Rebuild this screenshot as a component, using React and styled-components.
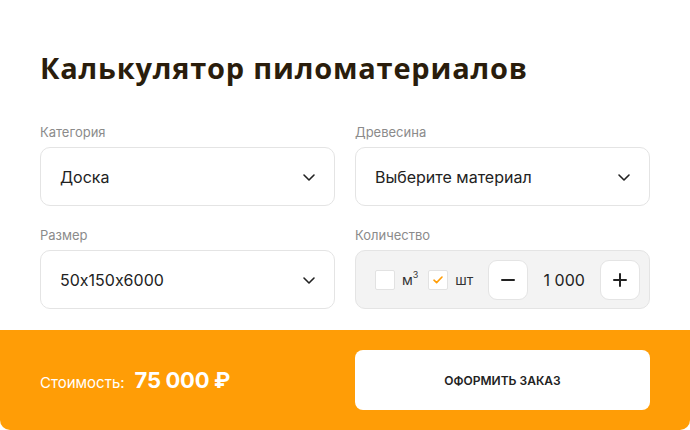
import React, { useState } from "react";
import styled, { createGlobalStyle } from "styled-components";

const GlobalStyle = createGlobalStyle`
  html, body {
    margin: 0;
    padding: 0;
    background: #fff;
  }
  body {
    font-family: "Inter", "Noto Sans", sans-serif;
    font-feature-settings: "calt" 0;
    color: #222;
  }
`;

const Card = styled.div`
  width: 690px;
  height: 430px;
  display: flex;
  flex-direction: column;
  background: #fff;
  border-radius: 0 0 10px 10px;
  overflow: hidden;
`;

const Body = styled.div`
  flex: 1;
  padding: 48px 40px 0;
`;

const Title = styled.h1`
  margin: 0 0 36px;
  font-family: "Open Sans", "Inter", sans-serif;
  font-size: 29px;
  line-height: 40px;
  font-weight: 700;
  letter-spacing: 0.8px;
  color: #2a1d0c;
`;

const Grid = styled.div`
  display: grid;
  grid-template-columns: 295px 295px;
  column-gap: 20px;
  row-gap: 21px;
`;

const Field = styled.div`
  display: flex;
  flex-direction: column;
`;

const Label = styled.div`
  font-size: 13px;
  line-height: 16px;
  color: #8b8b8b;
  margin-bottom: 7px;
`;

const SelectBox = styled.div`
  height: 59px;
  box-sizing: border-box;
  border: 1px solid #e4e4e4;
  border-radius: 10px;
  display: flex;
  align-items: center;
  justify-content: space-between;
  padding: 0 17px 0 19px;
  font-size: 16px;
  color: #222;
  cursor: pointer;
`;

const QtyBox = styled.div`
  height: 59px;
  box-sizing: border-box;
  border: 1px solid #e4e4e4;
  border-radius: 10px;
  background: #f3f3f3;
  display: flex;
  align-items: center;
  padding: 0 9px 0 19px;
`;

const Check = styled.span`
  width: 20px;
  height: 20px;
  box-sizing: border-box;
  border: 1px solid #e2e2e2;
  border-radius: 2px;
  background: #fff;
  display: flex;
  align-items: center;
  justify-content: center;
`;

const Unit = styled.span`
  font-size: 14px;
  color: #333;
  margin: 0 ${(p) => p.$after}px 0 7px;
  sup {
    font-size: 9px;
    vertical-align: 7px;
    line-height: 0;
  }
`;

const Step = styled.button`
  width: 40px;
  height: 40px;
  border: 1px solid #e4e4e4;
  border-radius: 9px;
  background: #fff;
  display: flex;
  align-items: center;
  justify-content: center;
  padding: 0;
  cursor: pointer;
`;

const Count = styled.span`
  flex: 1;
  text-align: center;
  font-size: 16px;
  color: #222;
`;

const Footer = styled.div`
  height: 100px;
  background: #ff9d06;
  display: flex;
  align-items: center;
  padding: 0 40px;
`;

const Cost = styled.div`
  width: 315px;
  display: flex;
  align-items: baseline;
  color: #fff;
`;

const CostLabel = styled.span`
  font-size: 15px;
  margin-right: 10px;
`;

const CostValue = styled.span`
  font-size: 22px;
  font-weight: 700;
  letter-spacing: -0.3px;
`;

const OrderButton = styled.button`
  width: 295px;
  height: 60px;
  border: 0;
  border-radius: 8px;
  background: #fff;
  font-family: inherit;
  font-size: 12px;
  font-weight: 600;
  color: #222;
  text-transform: uppercase;
  cursor: pointer;
`;

const Chevron = () => (
  <svg width="16" height="16" viewBox="0 0 16 16" fill="none">
    <path d="M3 6l5 5 5-5" stroke="#222" strokeWidth="1.6" strokeLinecap="round" strokeLinejoin="round" />
  </svg>
);

const Tick = () => (
  <svg width="10" height="8" viewBox="0 0 10 8" fill="none">
    <path d="M1 4.2l2.6 2.4L9 1" stroke="#ff9d06" strokeWidth="1.6" strokeLinecap="round" strokeLinejoin="round" />
  </svg>
);

const Select = ({ value }) => (
  <SelectBox>
    <span>{value}</span>
    <Chevron />
  </SelectBox>
);

export default function App() {
  const [count, setCount] = useState(1000);
  const [unit, setUnit] = useState("pcs");

  return (
    <>
      <GlobalStyle />
      <Card>
        <Body>
          <Title>Калькулятор пиломатериалов</Title>
          <Grid>
            <Field>
              <Label>Категория</Label>
              <Select value="Доска" />
            </Field>
            <Field>
              <Label>Древесина</Label>
              <Select value="Выберите материал" />
            </Field>
            <Field>
              <Label>Размер</Label>
              <Select value="50x150x6000" />
            </Field>
            <Field>
              <Label>Количество</Label>
              <QtyBox>
                <Check onClick={() => setUnit("m3")}>
                  {unit === "m3" && <Tick />}
                </Check>
                <Unit $after={10}>
                  м<sup>3</sup>
                </Unit>
                <Check onClick={() => setUnit("pcs")}>
                  {unit === "pcs" && <Tick />}
                </Check>
                <Unit $after={15}>шт</Unit>
                <Step onClick={() => setCount((c) => Math.max(0, c - 1))}>
                  <svg width="16" height="16" viewBox="0 0 16 16">
                    <path d="M2 8h12" stroke="#222" strokeWidth="2" strokeLinecap="round" />
                  </svg>
                </Step>
                <Count>{count.toLocaleString("ru-RU").replace(/\s/g, " ")}</Count>
                <Step onClick={() => setCount((c) => c + 1)}>
                  <svg width="16" height="16" viewBox="0 0 16 16">
                    <path d="M2 8h12M8 2v12" stroke="#222" strokeWidth="2" strokeLinecap="round" />
                  </svg>
                </Step>
              </QtyBox>
            </Field>
          </Grid>
        </Body>
        <Footer>
          <Cost>
            <CostLabel>Стоимость:</CostLabel>
            <CostValue>75 000 ₽</CostValue>
          </Cost>
          <OrderButton>Оформить заказ</OrderButton>
        </Footer>
      </Card>
    </>
  );
}
